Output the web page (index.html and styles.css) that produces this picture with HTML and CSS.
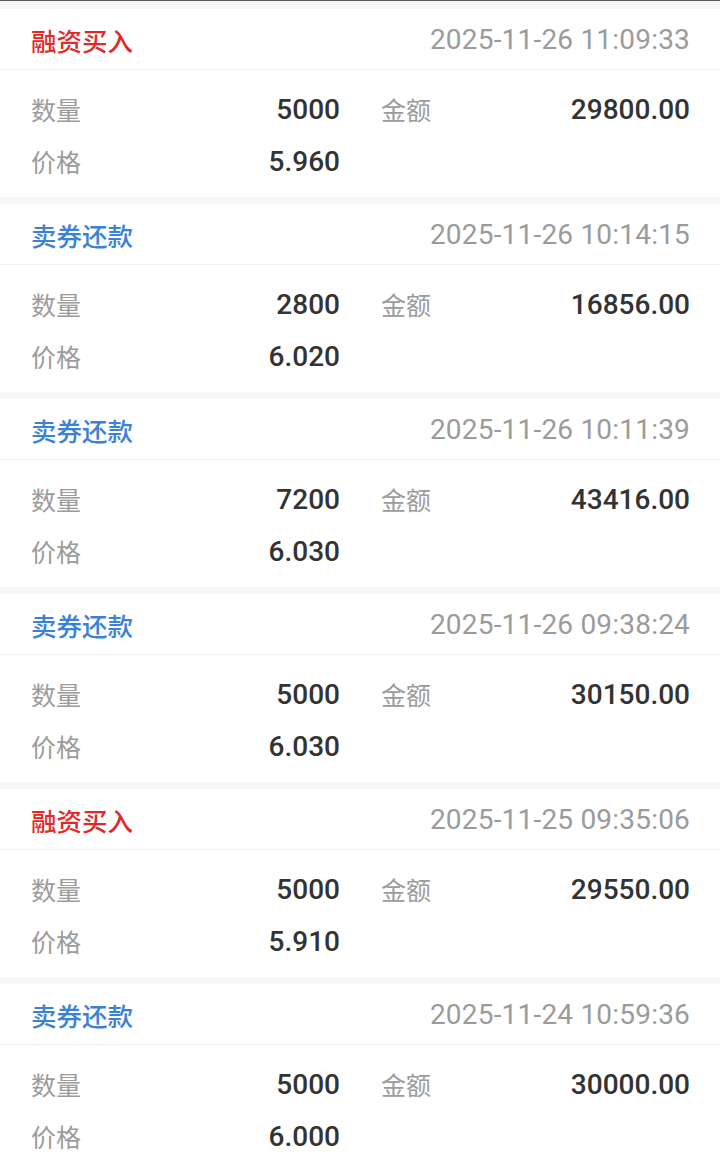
FILE: index.html
```html
<!DOCTYPE html>
<html lang="zh-CN">
<head>
    <meta charset="UTF-8">
    <meta name="viewport" content="width=device-width, initial-scale=1.0">
    <title>融资融券流水</title>
    <link rel="stylesheet" href="styles.css">
</head>
<body>
    <div class="list">
        <div class="card">
            <div class="cardHead">
                <span class="type buy">融资买入</span>
                <span class="time">2025-11-26 11:09:33</span>
            </div>
            <div class="cardBody">
                <div class="item"><span class="label">数量</span><span class="val">5000</span></div>
                <div class="item"><span class="label">金额</span><span class="val">29800.00</span></div>
                <div class="item"><span class="label">价格</span><span class="val">5.960</span></div>
            </div>
        </div>
        <div class="card">
            <div class="cardHead">
                <span class="type repay">卖券还款</span>
                <span class="time">2025-11-26 10:14:15</span>
            </div>
            <div class="cardBody">
                <div class="item"><span class="label">数量</span><span class="val">2800</span></div>
                <div class="item"><span class="label">金额</span><span class="val">16856.00</span></div>
                <div class="item"><span class="label">价格</span><span class="val">6.020</span></div>
            </div>
        </div>
        <div class="card">
            <div class="cardHead">
                <span class="type repay">卖券还款</span>
                <span class="time">2025-11-26 10:11:39</span>
            </div>
            <div class="cardBody">
                <div class="item"><span class="label">数量</span><span class="val">7200</span></div>
                <div class="item"><span class="label">金额</span><span class="val">43416.00</span></div>
                <div class="item"><span class="label">价格</span><span class="val">6.030</span></div>
            </div>
        </div>
        <div class="card">
            <div class="cardHead">
                <span class="type repay">卖券还款</span>
                <span class="time">2025-11-26 09:38:24</span>
            </div>
            <div class="cardBody">
                <div class="item"><span class="label">数量</span><span class="val">5000</span></div>
                <div class="item"><span class="label">金额</span><span class="val">30150.00</span></div>
                <div class="item"><span class="label">价格</span><span class="val">6.030</span></div>
            </div>
        </div>
        <div class="card">
            <div class="cardHead">
                <span class="type buy">融资买入</span>
                <span class="time">2025-11-25 09:35:06</span>
            </div>
            <div class="cardBody">
                <div class="item"><span class="label">数量</span><span class="val">5000</span></div>
                <div class="item"><span class="label">金额</span><span class="val">29550.00</span></div>
                <div class="item"><span class="label">价格</span><span class="val">5.910</span></div>
            </div>
        </div>
        <div class="card">
            <div class="cardHead">
                <span class="type repay">卖券还款</span>
                <span class="time">2025-11-24 10:59:36</span>
            </div>
            <div class="cardBody">
                <div class="item"><span class="label">数量</span><span class="val">5000</span></div>
                <div class="item"><span class="label">金额</span><span class="val">30000.00</span></div>
                <div class="item"><span class="label">价格</span><span class="val">6.000</span></div>
            </div>
        </div>
    </div>
</body>
</html>
```

FILE: styles.css
```css
body{
    margin: 0;
    background-color: #f6f7f9;
    font-family: Roboto, "Noto Sans CJK SC", sans-serif;
}
.list{
    border-top: 1px solid #5c5c5c;
    padding-top: 8px;
    display: flex;
    flex-direction: column;
    gap: 7px;
}
.card{
    background-color: white;
}
.cardHead{
    height: 61px;
    padding: 0 30px 0 31px;
    box-sizing: border-box;
    display: flex;
    align-items: center;
    justify-content: space-between;
    border-bottom: 1px solid #f2f2f2;
}
.type{
    font-size: 25.5px;
    font-weight: 500;
}
.buy{
    color: #e02a2a;
}
.repay{
    color: #3b82d6;
}
.time{
    font-size: 28px;
    letter-spacing: 0.2px;
    color: #9b9b9b;
}
.cardBody{
    padding: 13px 30px 10px 31px;
    display: grid;
    grid-template-columns: 309px 309px;
    column-gap: 41px;
}
.item{
    height: 52px;
    display: flex;
    align-items: center;
    justify-content: space-between;
}
.label{
    font-size: 25px;
    color: #9b9b9b;
}
.val{
    font-size: 28px;
    font-weight: 500;
    color: #333333;
}
```
